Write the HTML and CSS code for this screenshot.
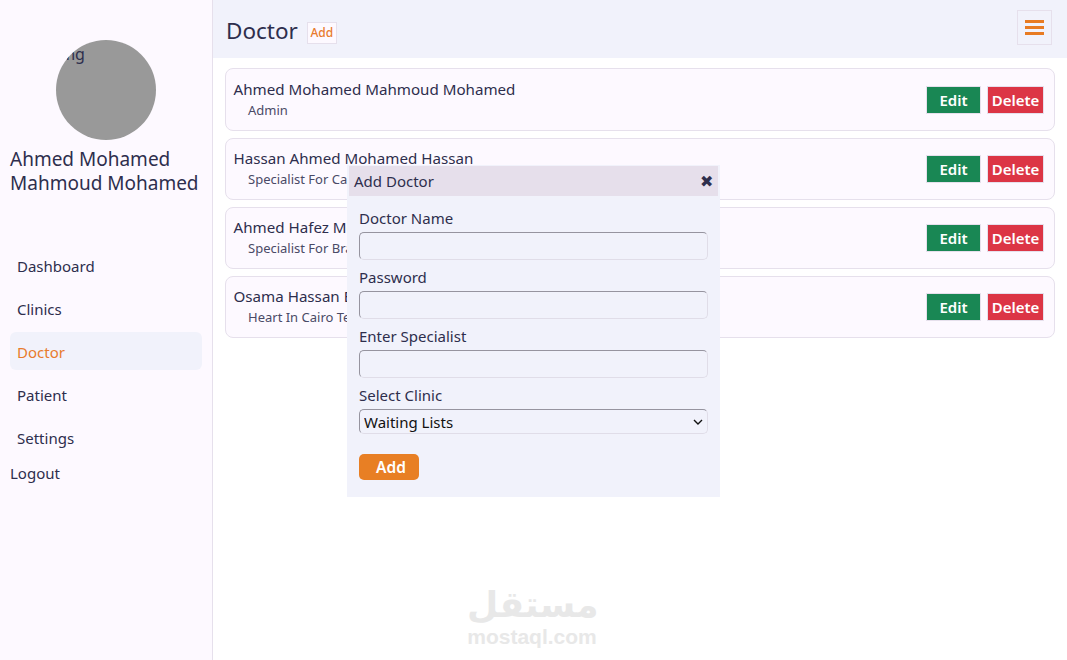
FILE: index.html
```html
<!DOCTYPE html>
<html lang="en">
<head>
  <meta charset="UTF-8">
  <title>Doctor</title>
  <link rel="stylesheet" href="styles.css">
</head>
<body>
  <div class="layout">
    <aside class="sidebar">
      <div class="avatar"><span>img</span></div>
      <h2 class="user-name">Ahmed Mohamed Mahmoud Mohamed</h2>
      <ul class="side-menu">
        <li><a href="#">Dashboard</a></li>
        <li><a href="#">Clinics</a></li>
        <li><a href="#" class="active">Doctor</a></li>
        <li><a href="#">Patient</a></li>
        <li><a href="#">Settings</a></li>
      </ul>
      <a href="#" class="logout">Logout</a>
    </aside>

    <main class="content">
      <div class="topbar">
        <h1>Doctor</h1>
        <button class="add-small">Add</button>
        <button class="menu-btn" aria-label="Menu">
          <span></span><span></span><span></span>
        </button>
      </div>

      <div class="doctors">
        <div class="doctor">
          <div class="doctor-info">
            <div class="doctor-name">Ahmed Mohamed Mahmoud Mohamed</div>
            <div class="doctor-spec">Admin</div>
          </div>
          <button class="btn-edit">Edit</button>
          <button class="btn-delete">Delete</button>
        </div>
        <div class="doctor">
          <div class="doctor-info">
            <div class="doctor-name">Hassan Ahmed Mohamed Hassan</div>
            <div class="doctor-spec">Specialist For Cardiology</div>
          </div>
          <button class="btn-edit">Edit</button>
          <button class="btn-delete">Delete</button>
        </div>
        <div class="doctor">
          <div class="doctor-info">
            <div class="doctor-name">Ahmed Hafez Mohamed</div>
            <div class="doctor-spec">Specialist For Brain</div>
          </div>
          <button class="btn-edit">Edit</button>
          <button class="btn-delete">Delete</button>
        </div>
        <div class="doctor">
          <div class="doctor-info">
            <div class="doctor-name">Osama Hassan Elsayed</div>
            <div class="doctor-spec">Heart In Cairo Team</div>
          </div>
          <button class="btn-edit">Edit</button>
          <button class="btn-delete">Delete</button>
        </div>
      </div>
    </main>
  </div>

  <div class="modal">
    <div class="modal-head">
      <span>Add Doctor</span>
      <span class="modal-close">✖</span>
    </div>
    <form class="modal-body">
      <label>Doctor Name</label>
      <input type="text">
      <label>Password</label>
      <input type="text">
      <label>Enter Specialist</label>
      <input type="text">
      <label>Select Clinic</label>
      <div class="select-wrap">
        <select>
          <option>Waiting Lists</option>
        </select>
        <svg class="select-arrow" width="10" height="6" viewBox="0 0 10 6">
          <path d="M1 1l4 4 4-4" fill="none" stroke="#111" stroke-width="1.4"/>
        </svg>
      </div>
      <button type="button" class="btn-add">Add</button>
    </form>
  </div>

  <div class="watermark">
    <div class="watermark-ar">مستقل</div>
    <div class="watermark-en">mostaql.com</div>
  </div>
</body>
</html>
```

FILE: styles.css
```css
/* GENERAL */
body {
  margin: 0;
  font-family: "Noto Sans", Arial, sans-serif;
  color: #2e2e4d;
  background: #fff;
  font-size: 15px;
}

.layout {
  display: flex;
  height: 660px;
}

/* SIDEBAR */
.sidebar {
  width: 213px;
  flex-shrink: 0;
  box-sizing: border-box;
  padding: 40px 10px 0;
  background: #fdf9ff;
  border-right: 1px solid #e6e0ec;
}

.avatar {
  width: 100px;
  height: 100px;
  margin: 0 auto;
  border-radius: 50%;
  overflow: hidden;
  background: #999;
  line-height: 28px;
  font-size: 16px;
}

.user-name {
  margin: 7px 0 0;
  font-size: 19px;
  font-weight: 400;
  line-height: 24px;
}

.side-menu {
  list-style: none;
  margin: 51px 0 0;
  padding: 0;
}

.side-menu li {
  margin-bottom: 5px;
}

.side-menu a {
  display: block;
  height: 38px;
  line-height: 40px;
  padding-left: 7px;
  border-radius: 6px;
  color: #2e2e4d;
  text-decoration: none;
}

.side-menu a.active {
  background: #f1f2fb;
  color: #e87b2d;
}

.logout {
  display: block;
  margin-top: 2px;
  line-height: 24px;
  color: #2e2e4d;
  text-decoration: none;
}

/* TOPBAR */
.content {
  flex: 1;
  min-width: 0;
}

.topbar {
  display: flex;
  align-items: center;
  height: 58px;
  padding: 0 15px 0 13px;
  box-sizing: border-box;
  background: #f1f2fb;
}

.topbar h1 {
  margin: 2px 0 0;
  font-size: 22.5px;
  font-weight: 400;
}

.add-small {
  margin-left: 9px;
  margin-top: 7px;
  width: 30px;
  height: 22px;
  padding: 0;
  border: 1px solid #e6e0ec;
  background: #fdf9ff;
  color: #e87b2d;
  font: inherit;
  font-size: 12px;
  font-weight: 500;
}

.menu-btn {
  margin-left: auto;
  margin-bottom: 3px;
  width: 35px;
  height: 35px;
  padding: 0 7px;
  display: flex;
  flex-direction: column;
  justify-content: center;
  gap: 3px;
  border: 1px solid #e6e0ec;
  background: #f1f2fb;
}

.menu-btn span {
  display: block;
  width: 100%;
  height: 3px;
  background: #e87b22;
}

/* LIST */
.doctors {
  padding: 10px 12px 0;
}

.doctor {
  display: flex;
  align-items: center;
  height: 62px;
  box-sizing: border-box;
  margin-bottom: 7px;
  padding: 0 10px 2px 7.5px;
  background: #fdf9ff;
  border: 1px solid #e6e0ec;
  border-radius: 8px;
}

.doctor:first-child {
  height: 63px;
}

.doctor-info {
  flex: 1;
}

.doctor-name {
  font-size: 15.15px;
  line-height: 22px;
}

.doctor-spec {
  padding-left: 14.5px;
  font-size: 13px;
  line-height: 20px;
  color: #4a4a66;
}

.btn-edit,
.btn-delete {
  height: 28px;
  margin-top: 2px;
  padding: 0;
  border: 1px solid #e6e0ec;
  color: #fff;
  font: inherit;
  font-weight: 600;
}

.btn-edit {
  width: 55px;
  background: #198754;
}

.btn-delete {
  width: 57px;
  margin-left: 6px;
  background: #dc3545;
}

/* MODAL */
.modal {
  position: absolute;
  left: 347px;
  top: 165px;
  width: 373px;
  height: 332px;
  box-sizing: border-box;
  padding: 1px 2px 0;
  background: #f1f2fb;
}

.modal-head {
  display: flex;
  align-items: center;
  justify-content: space-between;
  height: 30px;
  padding: 0 5px;
  background: #e6dfeb;
}

.modal-close {
  font-size: 16px;
}

.modal-body {
  display: flex;
  flex-direction: column;
  align-items: flex-start;
  padding: 10px 10px 0;
}

.modal-body label {
  line-height: 24px;
  margin-bottom: 2px;
}

.modal-body input {
  width: 100%;
  height: 28px;
  box-sizing: border-box;
  margin: 0 0 5px;
  border: 1px solid #e0dde8;
  border-top-color: #96949f;
  border-left-color: #96949f;
  border-radius: 5px;
  background: #f1f2fb;
}

.select-wrap {
  position: relative;
  width: 100%;
}

.select-wrap select {
  display: block;
  width: 100%;
  height: 25px;
  box-sizing: border-box;
  padding-left: 4px;
  border: 1px solid #e0dde8;
  border-top-color: #96949f;
  border-left-color: #96949f;
  border-radius: 5px;
  background: #f1f2fb;
  color: #111;
  font: inherit;
  appearance: none;
}

.select-arrow {
  position: absolute;
  right: 5px;
  top: 10px;
  pointer-events: none;
}

.btn-add {
  width: 60px;
  height: 26px;
  margin-top: 20px;
  padding: 0 0 0 4px;
  border: none;
  border-radius: 5px;
  background: #e87f24;
  color: #fff;
  font: inherit;
  font-size: 15.5px;
  font-weight: 600;
}

/* WATERMARK */
.watermark {
  position: absolute;
  left: 467px;
  top: 583px;
  width: 130px;
  text-align: center;
  color: #e8e8e8;
  font-weight: 700;
}

.watermark-ar {
  font-family: "DejaVu Sans", sans-serif;
  font-size: 36px;
  line-height: 44px;
}

.watermark-en {
  font-family: "Liberation Sans", sans-serif;
  font-size: 21px;
  line-height: 20px;
}
```
